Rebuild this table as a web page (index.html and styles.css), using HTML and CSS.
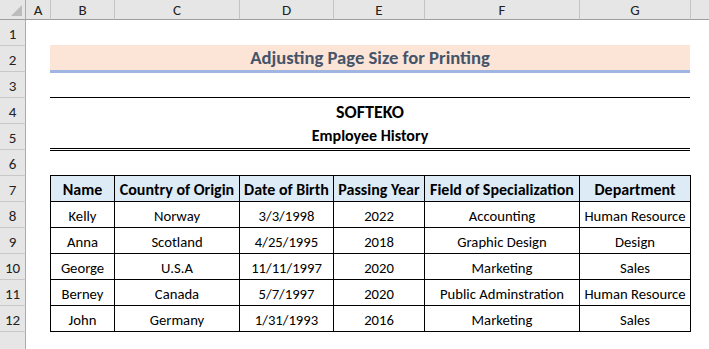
FILE: index.html
```html
<!DOCTYPE html>
<html lang="en">
<head>
<meta charset="utf-8">
<title>Adjusting Page Size for Printing</title>
<link rel="stylesheet" href="styles.css">
</head>
<body>
<div class="sheet">
  <div class="corner"><svg width="25" height="19" viewBox="0 0 25 19"><polygon points="11,16 22,16 22,5" fill="#bcbcbc"/></svg></div>
  <div class="ch ch-a">A</div>
  <div class="ch">B</div>
  <div class="ch">C</div>
  <div class="ch">D</div>
  <div class="ch">E</div>
  <div class="ch">F</div>
  <div class="ch">G</div>
  <div class="ch"></div>

  <div class="rh first">1</div>
  <div class="fill"></div>

  <div class="rh">2</div>
  <div></div>
  <div class="title">Adjusting Page Size for Printing</div>
  <div></div>

  <div class="rh">3</div>
  <div class="fill"></div>

  <div class="rh">4</div>
  <div></div>
  <div class="company">SOFTEKO</div>
  <div></div>

  <div class="rh">5</div>
  <div></div>
  <div class="subtitle">Employee History</div>
  <div></div>

  <div class="rh">6</div>
  <div class="fill"></div>

  <div class="rh">7</div>
  <div></div>
  <div class="td th">Name</div>
  <div class="td th">Country of Origin</div>
  <div class="td th">Date of Birth</div>
  <div class="td th">Passing Year</div>
  <div class="td th">Field of Specialization</div>
  <div class="td th last-col">Department</div>
  <div></div>

  <div class="rh">8</div>
  <div></div>
  <div class="td">Kelly</div>
  <div class="td">Norway</div>
  <div class="td">3/3/1998</div>
  <div class="td">2022</div>
  <div class="td">Accounting</div>
  <div class="td last-col">Human Resource</div>
  <div></div>

  <div class="rh">9</div>
  <div></div>
  <div class="td">Anna</div>
  <div class="td">Scotland</div>
  <div class="td">4/25/1995</div>
  <div class="td">2018</div>
  <div class="td">Graphic Design</div>
  <div class="td last-col">Design</div>
  <div></div>

  <div class="rh">10</div>
  <div></div>
  <div class="td">George</div>
  <div class="td">U.S.A</div>
  <div class="td">11/11/1997</div>
  <div class="td">2020</div>
  <div class="td">Marketing</div>
  <div class="td last-col">Sales</div>
  <div></div>

  <div class="rh">11</div>
  <div></div>
  <div class="td">Berney</div>
  <div class="td">Canada</div>
  <div class="td">5/7/1997</div>
  <div class="td">2020</div>
  <div class="td">Public Adminstration</div>
  <div class="td last-col">Human Resource</div>
  <div></div>

  <div class="rh">12</div>
  <div></div>
  <div class="td last-row">John</div>
  <div class="td last-row">Germany</div>
  <div class="td last-row">1/31/1993</div>
  <div class="td last-row">2016</div>
  <div class="td last-row">Marketing</div>
  <div class="td last-row last-col">Sales</div>
  <div></div>

  <div class="rh"></div>
  <div class="fill"></div>
</div>
</body>
</html>
```
FILE: styles.css
```css
* { box-sizing: border-box; }
html, body { margin: 0; padding: 0; background: #ffffff; }
body {
  width: 709px;
  height: 349px;
  overflow: hidden;
  font-family: "Carlito", "Lato", sans-serif;
  color: #000;
}
.sheet {
  display: grid;
  grid-template-columns: 26px 24px 64px 125px 94px 91px 155px 111px 1fr;
  grid-template-rows: 20px 25px repeat(12, 26px);
}
.corner {
  background: #e6e6e6;
  border-right: 1px solid #ababab;
  border-bottom: 1px solid #9e9e9e;
}
.corner svg { display: block; }
.ch {
  background: #e6e6e6;
  border-left: 1px solid #c4c4c4;
  border-bottom: 1px solid #9e9e9e;
  display: flex;
  align-items: center;
  justify-content: center;
  font-size: 15px;
  color: #222;
  padding-top: 1px;
}
.ch-a { border-left: 0; }
.rh {
  background: #e6e6e6;
  border-right: 1px solid #ababab;
  border-top: 1px solid #c8c8c8;
  display: flex;
  align-items: center;
  justify-content: center;
  font-size: 15px;
  color: #222;
  padding-top: 3px;
}
.rh.first { border-top: 0; }
.fill { grid-column: span 8; }
.title {
  grid-column: span 6;
  background: #fce4d6;
  border-bottom: 3px solid #9fb6e2;
  margin-bottom: -2px;
  display: flex;
  align-items: center;
  justify-content: center;
  font-weight: 700;
  font-size: 18.67px;
  color: #44546a;
  padding-bottom: 0;
}
.company {
  grid-column: span 6;
  border-top: 1px solid #000;
  display: flex;
  align-items: center;
  justify-content: center;
  font-weight: 700;
  font-size: 18px;
  padding-top: 2px;
}
.subtitle {
  grid-column: span 6;
  border-bottom: 3px double #000;
  margin-bottom: -2px;
  display: flex;
  align-items: center;
  justify-content: center;
  font-weight: 700;
  font-size: 16px;
}
.td {
  border-left: 1px solid #000;
  border-top: 1px solid #000;
  display: flex;
  align-items: center;
  justify-content: center;
  font-size: 14.67px;
  white-space: nowrap;
  padding-top: 2px;
}
.th {
  background: #ddebf7;
  font-weight: 700;
  font-size: 16px;
}
.last-col {
  border-right: 1px solid #000;
  margin-right: -1px;
}
.last-row {
  border-bottom: 1px solid #000;
  margin-bottom: -1px;
}
```
